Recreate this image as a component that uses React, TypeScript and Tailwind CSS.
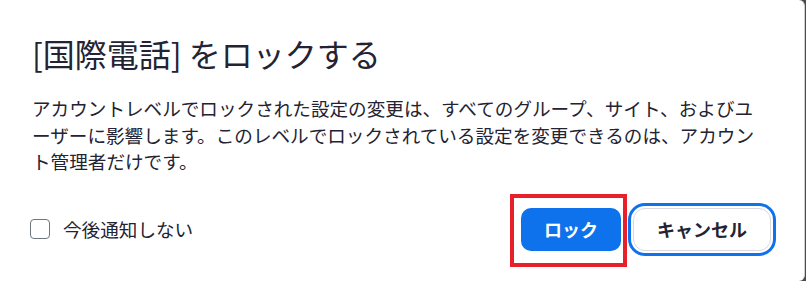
const bodyLines = [
  'アカウントレベルでロックされた設定の変更は、すべてのグループ、サイト、およびユ',
  'ーザーに影響します。このレベルでロックされている設定を変更できるのは、アカウン',
  'ト管理者だけです。',
];

export default function App() {
  return (
    <div className="w-[806px] h-[281px] bg-[#4b4b4b] overflow-hidden">
      <div
        className="w-[805px] h-[281px] bg-white border-r border-[#cfcfcf] rounded-tr-[6px] rounded-br-[6px] px-[32px] pt-[31px] text-[#232333]"
        style={{ fontFamily: '"Noto Sans CJK JP", "Noto Sans", sans-serif' }}
      >
        {/* Title */}
        <h2 className="text-[32px] leading-[44px] font-normal whitespace-nowrap">
          [国際電話] をロックする
        </h2>

        {/* Body */}
        <div className="mt-[20px] text-[18.6px] leading-[26.5px]">
          {bodyLines.map((line) => (
            <p key={line} className="whitespace-nowrap">
              {line}
            </p>
          ))}
        </div>

        {/* Footer */}
        <div className="mt-[33px] flex items-center justify-between pr-[1px]">
          <label className="flex items-center gap-[13px] -ml-[2px]">
            <span className="w-[20px] h-[20px] rounded-[4px] border-[1.5px] border-[#6e7680] bg-white" />
            <span className="text-[18.6px] leading-[26px]">今後通知しない</span>
          </label>

          <div className="flex items-center gap-[12px]">
            <div className="relative">
              <button className="w-[100px] h-[43px] rounded-[10px] bg-[#0e72ed] text-white text-[18px] font-bold">
                ロック
              </button>
              {/* highlight annotation */}
              <span className="absolute -left-[11px] -top-[14px] w-[117px] h-[73px] border-[4px] border-[#e8202a] pointer-events-none" />
            </div>
            <button className="w-[138px] h-[43px] rounded-[12px] bg-white border border-[#d9dade] text-[18px] font-bold text-[#232333] outline-[3px] outline-solid outline-[#0e72ed] outline-offset-[2px]">
              キャンセル
            </button>
          </div>
        </div>
      </div>
    </div>
  );
}
